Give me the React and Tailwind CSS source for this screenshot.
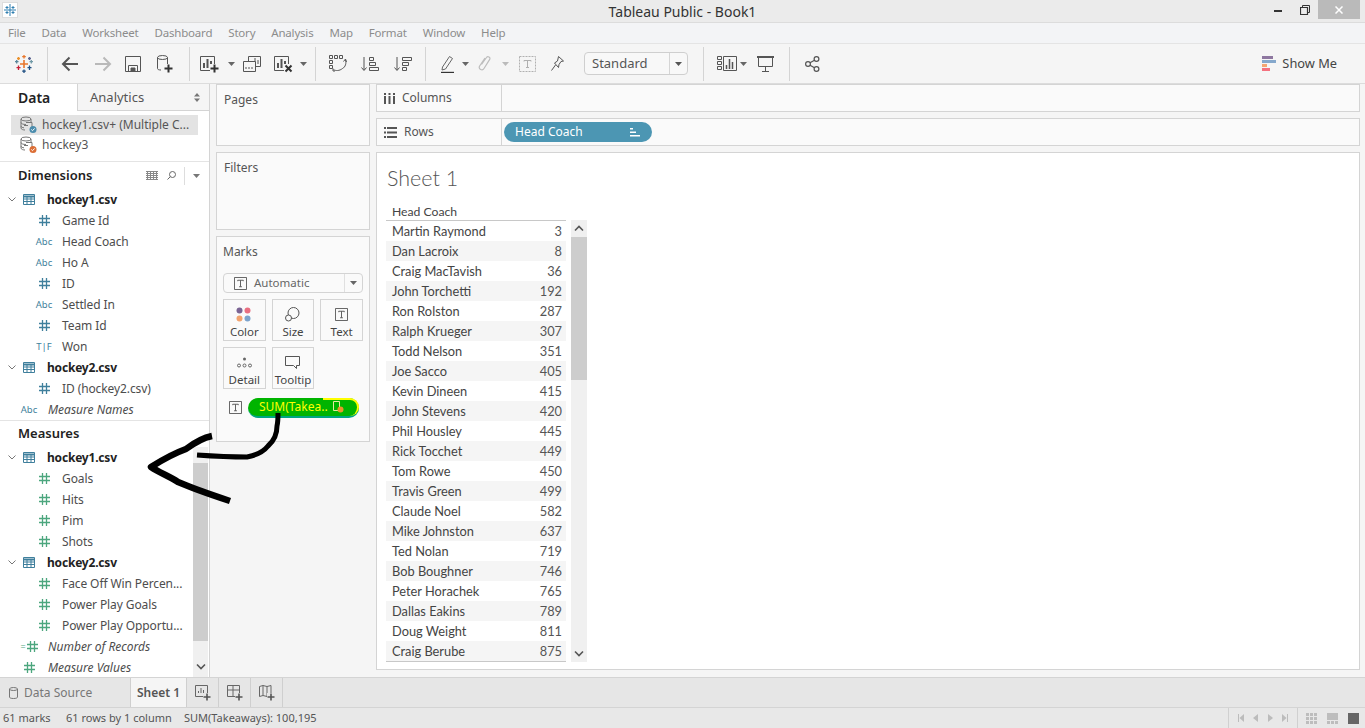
import React from "react";

const ui = { fontFamily: '"Noto Sans", "Liberation Sans", sans-serif' };
const book = { fontFamily: 'Lato, "Liberation Sans", sans-serif' };

const menus = ["File", "Data", "Worksheet", "Dashboard", "Story", "Analysis", "Map", "Format", "Window", "Help"];

const coaches = [
  ["Martin Raymond", 3], ["Dan Lacroix", 8], ["Craig MacTavish", 36], ["John Torchetti", 192],
  ["Ron Rolston", 287], ["Ralph Krueger", 307], ["Todd Nelson", 351], ["Joe Sacco", 405],
  ["Kevin Dineen", 415], ["John Stevens", 420], ["Phil Housley", 445], ["Rick Tocchet", 449],
  ["Tom Rowe", 450], ["Travis Green", 499], ["Claude Noel", 582], ["Mike Johnston", 637],
  ["Ted Nolan", 719], ["Bob Boughner", 746], ["Peter Horachek", 765], ["Dallas Eakins", 789],
  ["Doug Weight", 811], ["Craig Berube", 875],
];

function Caret({ color = "#666" }) {
  return (
    <svg className="shrink-0" width="7" height="4" viewBox="0 0 7 4"><path d="M0 0h7L3.500 4z" fill={color} /></svg>
  );
}

function Chevron({ up }) {
  return (
    <svg width="10" height="7" viewBox="0 0 10 7" fill="none" stroke="#555" strokeWidth="1.600">
      <path d={up ? "M1 5.500 5 1.500l4 4" : "M1 1.500l4 4 4-4"} />
    </svg>
  );
}

function Hash({ color }) {
  return (
    <svg width="11" height="11" viewBox="0 0 11 11" stroke={color} strokeWidth="1.300" fill="none">
      <path d="M3.500 0v11M7.500 0v11M0 3.500h11M0 7.500h11" />
    </svg>
  );
}

function TableIcon() {
  return (
    <svg width="12" height="11" viewBox="0 0 12 11" fill="none" stroke="#3f7f9c" strokeWidth="1">
      <path d="M.5.500h11v10H.5z" />
      <path d="M0 2.500h12" strokeWidth="2" />
      <path d="M.5 5h11M.5 7.500h11M4 3v7.500M8 3v7.500" />
    </svg>
  );
}

function Plus({ x, y }) {
  return <path d={`M${x} ${y - 4}v8M${x - 4} ${y}h8`} stroke="#333" strokeWidth="2" fill="none" />;
}

function DbIcon({ badge }) {
  return (
    <svg width="18" height="18" viewBox="0 0 18 18" fill="none" stroke="#777" strokeWidth="1">
      <ellipse cx="6" cy="3" rx="5" ry="2" />
      <path d="M1 3v9c0 1.500 2.500 2 4 2M11 3v3M1 6.500c0 1.200 2 2 5 2M1 10c0 1 1.500 1.700 3 1.800" />
      <path d="M6 6.500h6v5M4 9.500h4" />
      <circle cx="13" cy="13.500" r="3.500" fill={badge} stroke="none" />
      <path d="M11.300 13.500l1.200 1.200 2.200-2.300" stroke="#fff" />
    </svg>
  );
}

function TBox({ size = 14, color = "#555" }) {
  return (
    <svg width={size} height={size} viewBox="0 0 14 14" fill="none" stroke={color}>
      <path d="M.5.500h13v13H.5z" />
      <path d="M4 4.500v-1h6v1M7 3.500v7M5.500 10.500h3" />
    </svg>
  );
}

function Tool({ cell, children }) {
  return <div className={`flex items-center justify-center h-full ${cell}`}>{children}</div>;
}

function Sep() {
  return <div className="w-px h-[34px] bg-[#d4d4d4]" />;
}

function Toolbar() {
  return (
    <div className="flex items-center h-[40px] bg-[#f5f5f5] border-b border-[#dcdcdc]">
      <Tool cell="w-[47px]">
        <svg width="18" height="18" viewBox="0 0 18 18" fill="none" strokeWidth="1.300">
          <path d="M9 5v8M5 9h8" stroke="#e8762b" strokeWidth="1.600" />
          <path d="M9 0v3.500M7.200 1.700h3.600" stroke="#e8762b" />
          <path d="M9 14.500V18M7.200 16.200h3.600" stroke="#1f4f82" />
          <path d="M1.700 5v3.500M0 6.700h3.500" stroke="#59879b" />
          <path d="M16.300 5v3.500M14.500 6.700H18" stroke="#7099a6" />
          <path d="M3.500 10.500V15M1.500 12.700h4" stroke="#c72037" />
          <path d="M14.500 10.500V15M12.500 12.700h4" stroke="#1f4f82" />
          <path d="M3.500 2v3M2 3.500h3" stroke="#eb912b" />
          <path d="M14.500 2v3M13 3.500h3" stroke="#5b6591" />
        </svg>
      </Tool>
      <Sep />
      <Tool cell="w-[44px]">
        <svg width="18" height="16" viewBox="0 0 18 16" fill="none" stroke="#555" strokeWidth="2"><path d="M17 8H2M8.500 1.500 2 8l6.500 6.500" /></svg>
      </Tool>
      <Tool cell="w-[22px]">
        <svg width="18" height="16" viewBox="0 0 18 16" fill="none" stroke="#b9b9b9" strokeWidth="2"><path d="M1 8h15M9.500 1.500 16 8l-6.500 6.500" /></svg>
      </Tool>
      <Tool cell="w-[38px]">
        <svg width="16" height="16" viewBox="0 0 16 16" fill="none" stroke="#555"><path d="M.5.500h15v15H.5z" /><path d="M3.500 15.500v-6h9v6" /><path d="M6 12h4v3.500H6z" fill="#555" /></svg>
      </Tool>
      <Tool cell="w-[26px]">
        <svg width="18" height="18" viewBox="0 0 18 18" fill="none" stroke="#555">
          <ellipse cx="6.500" cy="2.500" rx="5" ry="2" />
          <path d="M1.500 2.500v11c0 1 1.500 1.500 3.500 1.500M11.500 2.500V9" />
          <Plus x={12.500} y={13.500} />
        </svg>
      </Tool>
      <div className="w-[11px]" />
      <Sep />
      <Tool cell="w-[36px] ml-[1px]">
        <svg width="19" height="18" viewBox="0 0 19 18" fill="none" stroke="#555">
          <path d="M.5 1.500h14v14H.5z" />
          <path d="M4 8v5M7.500 4v9M11 6v7" strokeWidth="2" />
          <rect x="10" y="9" width="9" height="9" fill="#f5f5f5" stroke="none" />
          <Plus x={14.500} y={13.500} />
        </svg>
      </Tool>
      <Tool cell="w-[8px]"><Caret /></Tool>
      <Tool cell="w-[33px]">
        <svg width="18" height="16" viewBox="0 0 18 16" fill="none" stroke="#555">
          <path d="M5.500.500h12v10h-12z" />
          <path d="M9 8V5M12 8V2M15 8V4" />
          <path d="M.5 5.500h12v10H.5z" fill="#f5f5f5" />
          <path d="M3 13v-2M6 13v-2M9 13v-2" />
        </svg>
      </Tool>
      <Tool cell="w-[30px]">
        <svg width="19" height="18" viewBox="0 0 19 18" fill="none" stroke="#555">
          <path d="M.5 1.500h14v14H.5z" />
          <path d="M4 8v5M7.500 4v9M11 6v7" strokeWidth="2" />
          <rect x="10" y="9" width="9" height="9" fill="#f5f5f5" stroke="none" />
          <path d="M11.500 10.500l6 6M17.500 10.500l-6 6" stroke="#333" strokeWidth="2" />
        </svg>
      </Tool>
      <Tool cell="w-[10px]"><Caret /></Tool>
      <div className="w-[7px]" />
      <Sep />
      <Tool cell="w-[43px]">
        <svg width="18" height="17" viewBox="0 0 18 17" fill="none" stroke="#555">
          <path d="M.5.500h3v3h-3zM5.500.500h3v3h-3zM10.500.500h3v3h-3zM.5 5.500h3v3h-3zM.5 10.500h3v3h-3z" />
          <path d="M16.500 5c1 3 0 7-3 8.500M4.500 14.500c2 1.500 6 1.500 9-1M14.500 6.500 16.500 4l1 3M6 16H4v-2.500" />
        </svg>
      </Tool>
      <Tool cell="w-[22px]">
        <svg width="18" height="16" viewBox="0 0 18 16" fill="none" stroke="#555">
          <path d="M3 1v13M.5 11.500 3 14.500l2.500-3" />
          <path d="M8.500 1.500h4v3h-4zM8.500 6.500h6v3h-6zM8.500 11.500h9v3h-9z" />
        </svg>
      </Tool>
      <Tool cell="w-[44px]">
        <svg width="18" height="16" viewBox="0 0 18 16" fill="none" stroke="#555">
          <path d="M3 1v13M.5 11.500 3 14.500l2.500-3" />
          <path d="M8.500 1.500h9v3h-9zM8.500 6.500h6v3h-6zM8.500 11.500h4v3h-4z" />
        </svg>
      </Tool>
      <Sep />
      <Tool cell="w-[34px] ml-[4px]">
        <svg width="13" height="18" viewBox="0 0 13 18" fill="none" stroke="#666">
          <path d="M1.500 12 8.500 1.500l3 2L4.500 14l-3.500 1z" />
          <path d="M0 17.500h13" stroke="#333" strokeWidth="1.400" />
        </svg>
      </Tool>
      <Tool cell="w-[2px]"><Caret /></Tool>
      <Tool cell="w-[38px]">
        <svg width="14" height="17" viewBox="0 0 14 17" fill="none" stroke="#bdbdbd" strokeWidth="1.200">
          <path d="M3.500 9.500 8.500 2.500c1.300-1.700 4.200-.2 3.200 1.900L6 13.500c-1.600 2.600-5.800.8-4.500-2.300L7 3" />
        </svg>
      </Tool>
      <Tool cell="w-[2px]"><Caret color="#bbb" /></Tool>
      <Tool cell="w-[42px]">
        <svg width="17" height="16" viewBox="0 0 17 16" fill="none" stroke="#b0b0b0">
          <path d="M.5.500h16v15H.5z" strokeDasharray="2 1" />
          <path d="M5 5.500v-1h7v1M8.500 4.500v7M7 11.500h3" />
        </svg>
      </Tool>
      <Tool cell="w-[18px]">
        <svg width="13" height="15" viewBox="0 0 13 15" fill="none" stroke="#555">
          <path d="M7.500.500l5 4.500-2.500.5-2 3-.5 3L3.500 7l3-2z" />
          <path d="M4.500 9 .5 14.500" />
        </svg>
      </Tool>
      <div className="w-[18px]" />
      <div className="flex items-center h-[23px] w-[104px] border border-[#cfcfcf] rounded-sm bg-[#f8f8f8]">
        <div className="flex-1 pl-[7px] text-[13px] text-[#555]">Standard</div>
        <div className="flex items-center justify-center w-[18px] h-full border-l border-[#d5d5d5]"><Caret color="#555" /></div>
      </div>
      <div className="w-[15px]" />
      <Sep />
      <Tool cell="w-[21px] ml-[12px]">
        <svg width="20" height="15" viewBox="0 0 20 15" fill="none" stroke="#555">
          <path d="M.5.500h4v3h-4zM.5 5.500h4v3h-4zM.5 10.500h4v3h-4zM6.500.500h13v14h-13z" />
          <path d="M9.500 13V9M12.500 13V3M15.500 13V6" strokeWidth="1.500" />
        </svg>
      </Tool>
      <Tool cell="w-[12px]"><Caret /></Tool>
      <Tool cell="w-[32px]">
        <svg width="17" height="16" viewBox="0 0 17 16" fill="none" stroke="#555">
          <path d="M0 1h17" strokeWidth="2" />
          <path d="M1.500 1v9.500h14V1M8.500 10.500v5M5 15.500h7" />
        </svg>
      </Tool>
      <div className="w-[8px]" />
      <Sep />
      <Tool cell="w-[44px]">
        <svg width="15" height="16" viewBox="0 0 15 16" fill="none" stroke="#555" strokeWidth="1.200">
          <circle cx="3" cy="8" r="2.400" /><circle cx="11.500" cy="3" r="2.400" /><circle cx="11.500" cy="13" r="2.400" />
          <path d="M5 6.800l4.500-2.600M5 9.200l4.500 2.600" />
        </svg>
      </Tool>
      <div className="flex-1" />
      <div className="flex items-center gap-[6px] pr-[28px]">
        <div className="flex flex-col gap-px">
          <div className="w-[11px] h-[3px] bg-[#8e77a0]" />
          <div className="w-[14px] h-[3px] bg-[#85a8cc]" />
          <div className="w-[5px] h-[3px] bg-[#f4a672]" />
          <div className="w-[8px] h-[3px] bg-[#f4727f]" />
        </div>
        <span className="text-[12.800px] text-[#444]">Show Me</span>
      </div>
    </div>
  );
}

function TreeFile({ name }) {
  return (
    <div className="flex items-center h-[21px]">
      <div className="flex justify-center w-[23px]"><svg width="8" height="5" viewBox="0 0 8 5" fill="none" stroke="#777"><path d="M.5.500 4 4 7.500.500" /></svg></div>
      <TableIcon />
      <span className="ml-[12px] text-[12px] font-bold tracking-[-0.2px] text-[#222]">{name}</span>
    </div>
  );
}

function Abc() {
  return <span className="text-[9.500px] leading-none text-[#3f7f9c]">Abc</span>;
}

function Field({ icon, children }) {
  return (
    <div className="flex items-center h-[21px] pl-[32px]">
      <div className="flex justify-center w-[24px]">{icon}</div>
      <span className="ml-[6px] text-[12px] tracking-[-0.1px] text-[#4d4d4d] whitespace-nowrap">{children}</span>
    </div>
  );
}

function Special({ icon, children }) {
  return (
    <div className="flex items-center h-[21px] pl-[17px]">
      <div className="flex justify-center w-[24px]">{icon}</div>
      <span className="ml-[7px] text-[12px] italic text-[#4d4d4d] whitespace-nowrap">{children}</span>
    </div>
  );
}

function DataPane() {
  const dim = <Hash color="#3f7f9c" />;
  const mea = <Hash color="#4ca67e" />;
  return (
    <div className="flex flex-col w-[210px] shrink-0 bg-white border-r border-[#d4d4d4]">
      <div className="flex h-[27px] shrink-0">
        <div className="flex items-center w-[77px] pl-[18px] text-[14px] font-semibold text-[#222]">Data</div>
        <div className="flex flex-1 items-center pl-[12px] pr-[9px] pt-[1px] bg-[#f5f5f5] border-l border-b border-[#d4d4d4] text-[13px] text-[#555]">
          <span className="flex-1">Analytics</span>
          <svg width="6" height="9" viewBox="0 0 6 9" fill="#777"><path d="M0 3.500 3 0l3 3.500zM0 5.500 3 9l3-3.500z" /></svg>
        </div>
      </div>
      <div className="h-[51px] shrink-0 border-b border-[#e4e4e4] pt-[4px]">
        <div className="flex items-center h-[20px] mx-[11px] w-[187px] pl-[9px] gap-[4px] bg-[#e3e3e3]">
          <DbIcon badge="#4a8cad" />
          <span className="text-[12px] text-[#555] whitespace-nowrap">hockey1.csv+ (Multiple C...</span>
        </div>
        <div className="flex items-center h-[20px] mx-[11px] pl-[9px] gap-[4px]">
          <DbIcon badge="#dc6e35" />
          <span className="text-[12px] text-[#555]">hockey3</span>
        </div>
      </div>
      <div className="flex items-center h-[27px] shrink-0 pl-[18px] pr-[9px]">
        <span className="flex-1 text-[13px] font-semibold text-[#222]">Dimensions</span>
        <svg width="12" height="9" viewBox="0 0 12 9" stroke="#888" fill="none"><path d="M0 .500h12M0 2.500h12M0 4.500h12M0 6.500h12M0 8.500h12M1.500 0v9M4.500 0v9M7.500 0v9M10.500 0v9" /></svg>
        <svg className="ml-[9px]" width="9" height="9" viewBox="0 0 9 9" stroke="#666" fill="none"><circle cx="5.500" cy="3.500" r="3" /><path d="M3.300 5.700.5 8.500" /></svg>
        <div className="w-px h-[18px] bg-[#ddd] ml-[8px] mr-[8px]" />
        <Caret color="#777" />
      </div>
      <div className="shrink-0">
        <TreeFile name="hockey1.csv" />
        <Field icon={dim}>Game Id</Field>
        <Field icon={<Abc />}>Head Coach</Field>
        <Field icon={<Abc />}>Ho A</Field>
        <Field icon={dim}>ID</Field>
        <Field icon={<Abc />}>Settled In</Field>
        <Field icon={dim}>Team Id</Field>
        <Field icon={<span className="text-[9.500px] leading-none text-[#3f7f9c]">T|F</span>}>Won</Field>
        <TreeFile name="hockey2.csv" />
        <Field icon={dim}>ID (hockey2.csv)</Field>
        <Special icon={<Abc />}>Measure Names</Special>
      </div>
      <div className="h-[27px] shrink-0 pb-[1px] border-t border-[#e4e4e4] pl-[18px] flex items-center text-[13px] font-semibold text-[#222]">Measures</div>
      <div className="flex flex-1 min-h-0">
        <div className="flex-1 overflow-hidden">
          <TreeFile name="hockey1.csv" />
          <Field icon={mea}>Goals</Field>
          <Field icon={mea}>Hits</Field>
          <Field icon={mea}>Pim</Field>
          <Field icon={mea}>Shots</Field>
          <TreeFile name="hockey2.csv" />
          <Field icon={mea}>Face Off Win Percen...</Field>
          <Field icon={mea}>Power Play Goals</Field>
          <Field icon={mea}>Power Play Opportu...</Field>
          <Special icon={<span className="flex items-center gap-px"><span className="text-[9px] leading-none text-[#4ca67e]">=</span><Hash color="#4ca67e" /></span>}>Number of Records</Special>
          <Special icon={mea}>Measure Values</Special>
        </div>
        <div className="flex flex-col w-[15px] mr-[1px] bg-[#f0f0f0]">
          <div className="h-[16px]" />
          <div className="h-[178px] bg-[#cdcdcd]" />
          <div className="flex-1" />
          <div className="flex justify-center h-[14px]"><Chevron /></div>
        </div>
      </div>
    </div>
  );
}

function MarkBtn({ icon, label }) {
  return (
    <div className="flex flex-col items-center justify-end h-[42px] border border-[#d4d4d4] text-[11.500px] text-[#444]">
      <div className="flex items-center justify-center h-[20px]">{icon}</div>
      <span className="leading-[16px]">{label}</span>
    </div>
  );
}

function Shelves() {
  return (
    <div className="flex flex-col w-[166px] shrink-0 gap-[6px] px-[6px]">
      <div className="h-[62px] bg-[#fafafa] border border-[#d4d4d4] pl-[7px] pt-[6px] text-[12px] text-[#555]">Pages</div>
      <div className="h-[78px] bg-[#fafafa] border border-[#d4d4d4] pl-[7px] pt-[6px] text-[12px] text-[#555]">Filters</div>
      <div className="h-[206px] bg-[#fafafa] border border-[#d4d4d4] px-[6px] pt-[6px]">
        <div className="text-[12px] text-[#555]">Marks</div>
        <div className="flex items-center h-[20px] mt-[12px] border border-[#d4d4d4] rounded-sm">
          <div className="flex flex-1 items-center pl-[10px] gap-[7px] text-[11.500px] text-[#666]">
            <TBox size={13} />
            <span>Automatic</span>
          </div>
          <div className="flex items-center justify-center w-[18px] h-full border-l border-[#e0e0e0]"><Caret /></div>
        </div>
        <div className="grid grid-cols-3 gap-x-[6px] gap-y-[6px] mt-[6px]">
          <MarkBtn
            label="Color"
            icon={
              <svg width="16" height="15" viewBox="0 0 16 15">
                <circle cx="3.500" cy="3.500" r="3" fill="#7b6494" /><circle cx="11.500" cy="3.500" r="3" fill="#e96f81" />
                <circle cx="3.500" cy="11.500" r="3" fill="#f2a36f" /><circle cx="11.500" cy="11.500" r="3" fill="#7ca3cc" />
              </svg>
            }
          />
          <MarkBtn
            label="Size"
            icon={
              <svg width="15" height="15" viewBox="0 0 15 15" fill="none" stroke="#555">
                <circle cx="8.500" cy="6" r="5.500" /><circle cx="3.500" cy="11" r="3" fill="#fafafa" />
              </svg>
            }
          />
          <MarkBtn label="Text" icon={<TBox size={13} />} />
          <MarkBtn
            label="Detail"
            icon={
              <svg width="15" height="11" viewBox="0 0 15 11" fill="none" stroke="#666">
                <circle cx="7.500" cy="2" r="1.500" fill="#666" stroke="none" />
                <circle cx="2" cy="8.500" r="1.500" /><circle cx="7.500" cy="8.500" r="1.500" /><circle cx="13" cy="8.500" r="1.500" />
              </svg>
            }
          />
          <MarkBtn
            label="Tooltip"
            icon={
              <svg width="15" height="13" viewBox="0 0 15 13" fill="none" stroke="#555">
                <path d="M.5.500h14v9h-3v3l-3-3H.5z" />
              </svg>
            }
          />
        </div>
        <div className="flex items-center mt-[8px] h-[21px]">
          <div className="ml-[6px] mr-[6px]"><TBox size={13} /></div>
          <div className="relative flex items-center w-[111px] h-[20px] pl-[11px] rounded-full bg-[#00b400] border-b-2 border-[#00a583] text-[12px] text-[#ffff00] whitespace-nowrap">
            SUM(Takea..
            <svg className="ml-[4px]" width="12" height="13" viewBox="0 0 12 13" fill="none" stroke="#e8e8a0">
              <path d="M1.500 1.500h6v9h-6z" />
              <circle cx="8.500" cy="9.500" r="3" fill="#e8962c" stroke="none" />
            </svg>
            <div className="absolute top-0 right-0 w-[36px] h-full rounded-r-full border-t-2 border-r-2 border-[#ffff00]" />
          </div>
        </div>
      </div>
    </div>
  );
}

function Shelf({ icon, label, children }) {
  return (
    <div className="flex h-[28px] bg-[#fafafa] border border-[#d4d4d4]">
      <div className="flex items-center w-[125px] pl-[7px] gap-[7px] border-r border-[#d4d4d4] text-[12px] text-[#555]">
        {icon}
        <span>{label}</span>
      </div>
      <div className="flex flex-1 items-center pl-[2px]">{children}</div>
    </div>
  );
}

function SheetView() {
  return (
    <div className="flex-1 min-h-0 bg-white border border-[#d4d4d4] pl-[9px] pt-[11px] overflow-hidden" style={book}>
      <div className="ml-[1px] text-[21.500px] font-light leading-[28px] text-[#555]">Sheet 1</div>
      <div className="flex mt-[10px]">
        <div className="w-[180px]">
          <div className="flex items-end h-[19px] pl-[6px] pb-[2px] border-b border-[#c8c8c8] text-[12.200px] leading-none text-[#444]">Head Coach</div>
          {coaches.map(([name, n], i) => (
            <div key={name} className={`flex justify-between items-center h-[20px] pt-[1px] pl-[6px] pr-[4px] text-[12.800px] text-[#444] ${i % 2 === 1 ? "bg-[#f5f5f5]" : ""}`}>
              <span>{name}</span>
              <span className="text-[#555]">{n}</span>
            </div>
          ))}
          <div className="h-px bg-[#c8c8c8]" />
        </div>
        <div className="flex flex-col w-[16px] ml-[5px] mt-[18px] bg-[#f0f0f0]">
          <div className="flex items-center justify-center h-[17px]"><Chevron up /></div>
          <div className="h-[143px] bg-[#cdcdcd]" />
          <div className="flex-1" />
          <div className="flex items-center justify-center h-[17px]"><Chevron /></div>
        </div>
      </div>
    </div>
  );
}

function TabBtn({ children }) {
  return <div className="flex items-center justify-center w-[32px] h-full border-r border-[#cfcfcf]">{children}</div>;
}

function AddTabIcon({ kind }) {
  return (
    <svg width="16" height="16" viewBox="0 0 16 16" fill="none" stroke="#666">
      {kind === "sheet" && <path d="M.5.500h12v11H.5zM3.500 8V6M6 8V3M8.500 8V5" />}
      {kind === "dash" && <path d="M.5.500h12v11H.5zM.5 5h12M6 .500V11.500" />}
      {kind === "story" && <path d="M.5 1.500 4 .500l4 1 4-1v10l-4 1-4-1-3.500 1zM4 .500v10M8 1.500v10" />}
      <rect x="8" y="8" width="8" height="8" fill="#e6e6e6" stroke="none" />
      <path d="M12 8.500v7M8.500 12h7" stroke="#555" strokeWidth="1.600" />
    </svg>
  );
}

// hand drawn annotation that sits over the panes
function Scribble() {
  return (
    <svg className="absolute left-0 top-0 pointer-events-none" width="300" height="520" fill="none" stroke="#000" strokeWidth="6.500" strokeLinejoin="round">
      <path d="M212 436c-10 2-18 7-26 13-11 4-24 11-35 18 9 6 18 9 27 15 16 7 34 13 52 19" />
      <path d="M197 455c14 1 33 2 50 2 11-2 17-6 21-11 7-6 9-14 9-20 1-4 1-9 1-13" strokeWidth="5" />
    </svg>
  );
}

export default function App() {
  return (
    <div className="relative flex flex-col w-[1365px] h-[728px] overflow-hidden bg-[#f5f5f5]" style={ui}>
      <div className="relative flex items-center justify-center h-[23px] shrink-0 bg-[#ebebeb] border-b border-[#dcdcdc] text-[14px] text-[#333]">
        <div className="absolute left-[2px] top-[2px] flex items-center justify-center w-[16px] h-[16px] bg-white border border-[#ddd]">
          <svg width="12" height="12" viewBox="0 0 12 12" stroke="#2f7fb0" fill="none">
            <path d="M6 0v12M0 6h12M3 2v3M1.500 3.500h3M9 2v3M7.500 3.500h3M3 7v3M1.500 8.500h3M9 7v3M7.500 8.500h3" />
          </svg>
        </div>
        Tableau Public - Book1
        <div className="absolute right-[5px] top-0 flex items-center h-[19px]">
          <div className="w-[8px] h-[2px] bg-[#333] mr-[18px] mt-[2px]" />
          <svg className="mr-[8px]" width="10" height="10" viewBox="0 0 10 10" fill="none" stroke="#333">
            <path d="M2.500 2V.500h7v7H8" /><path d="M.5 2.500h7v7h-7z" strokeWidth="1.200" />
          </svg>
          <div className="flex items-center justify-center w-[42px] h-[19px] bg-[#bababa]">
            <svg width="8" height="8" viewBox="0 0 8 8" stroke="#fff" strokeWidth="1.500"><path d="M.5.500l7 7M7.500.500l-7 7" /></svg>
          </div>
        </div>
      </div>

      <div className="flex items-center h-[21px] shrink-0 pl-[8px] gap-[16px] bg-[#f3f4f6] border-b border-[#e4e4e4] text-[11.500px] tracking-[-0.2px] text-[#8c8c8c]">
        {menus.map((m) => <span key={m}>{m}</span>)}
      </div>

      <Toolbar />

      <div className="flex flex-1 min-h-0">
        <DataPane />
        <Shelves />
        <div className="flex flex-col flex-1 min-w-0 gap-[6px] pr-[5px] pb-[7px]">
          <Shelf
            label="Columns"
            icon={<svg width="11" height="11" viewBox="0 0 11 11" fill="#555"><path d="M0 0h2v2H0zM4.500 0h2v2h-2zM9 0h2v2H9zM0 3h2v8H0zM4.500 3h2v8h-2zM9 3h2v8H9z" /></svg>}
          />
          <Shelf
            label="Rows"
            icon={<svg width="13" height="11" viewBox="0 0 13 11" fill="#555"><path d="M0 0h2v2H0zM3 0h10v2H3zM0 4.500h2v2H0zM3 4.500h10v2H3zM0 9h2v2H0zM3 9h10v2H3z" /></svg>}
          >
            <div className="flex items-center w-[148px] h-[20px] pl-[11px] pr-[12px] rounded-full bg-[#4c96b3] text-[12px] text-white">
              <span className="flex-1">Head Coach</span>
              <svg width="10" height="9" viewBox="0 0 10 9" fill="#fff"><path d="M0 0h3v1.500H0zM0 3.500h6V5H0zM0 7h10v1.500H0z" /></svg>
            </div>
          </Shelf>
          <SheetView />
        </div>
      </div>

      <div className="flex items-stretch h-[30px] shrink-0 bg-[#e6e6e6] border-t border-[#d4d4d4]">
        <div className="flex items-center w-[131px] pl-[9px] gap-[6px] border-r border-[#cfcfcf] text-[12px] text-[#777]">
          <svg width="9" height="12" viewBox="0 0 9 12" fill="none" stroke="#777"><ellipse cx="4.500" cy="2" rx="4" ry="1.500" /><path d="M.5 2v8c0 1 1.500 1.500 4 1.500s4-.5 4-1.500V2" /></svg>
          Data Source
        </div>
        <div className="flex items-center justify-center w-[56px] bg-[#f5f5f5] border-r border-[#cfcfcf] text-[12px] font-semibold text-[#555]">Sheet 1</div>
        <TabBtn><AddTabIcon kind="sheet" /></TabBtn>
        <TabBtn><AddTabIcon kind="dash" /></TabBtn>
        <TabBtn><AddTabIcon kind="story" /></TabBtn>
      </div>

      <div className="flex items-center h-[21px] shrink-0 pl-[3px] bg-[#e8e8e8] border-t border-[#d4d4d4] text-[11px] text-[#555] whitespace-nowrap">
        <span className="w-[63px]">61 marks</span>
        <span className="w-[118px]">61 rows by 1 column</span>
        <span>SUM(Takeaways): 100,195</span>
        <div className="flex-1" />
        <div className="flex items-center justify-around w-[70px] h-full px-[4px] border-l border-r border-[#d0d0d0]">
          <svg width="6" height="8" viewBox="0 0 6 8" fill="#bcbcbc"><path d="M0 0h1v8H0zM6 0v8L1.500 4z" /></svg>
          <svg width="5" height="8" viewBox="0 0 5 8" fill="#bcbcbc"><path d="M5 0v8L0 4z" /></svg>
          <svg width="5" height="8" viewBox="0 0 5 8" fill="#bcbcbc"><path d="M0 0v8l5-4z" /></svg>
          <svg width="6" height="8" viewBox="0 0 6 8" fill="#bcbcbc"><path d="M5 0h1v8H5zM0 0v8l4.500-4z" /></svg>
        </div>
        <div className="flex items-center gap-[10px] pl-[8px] pr-[0px] w-[67px]">
          <svg width="11" height="11" viewBox="0 0 11 11" fill="#bdbdbd"><path d="M0 0h3v3H0zM4 0h3v3H4zM8 0h3v3H8zM0 4h3v3H0zM4 4h3v3H4zM8 4h3v3H8zM0 8h3v3H0zM4 8h3v3H4zM8 8h3v3H8z" /></svg>
          <svg width="11" height="11" viewBox="0 0 11 11" fill="#bdbdbd"><path d="M0 0h11v7H0zM0 8h3v3H0zM4 8h3v3H4zM8 8h3v3H8z" /></svg>
          <div className="w-[11px] h-[11px] bg-[#666]" />
        </div>
      </div>

      <Scribble />
    </div>
  );
}
